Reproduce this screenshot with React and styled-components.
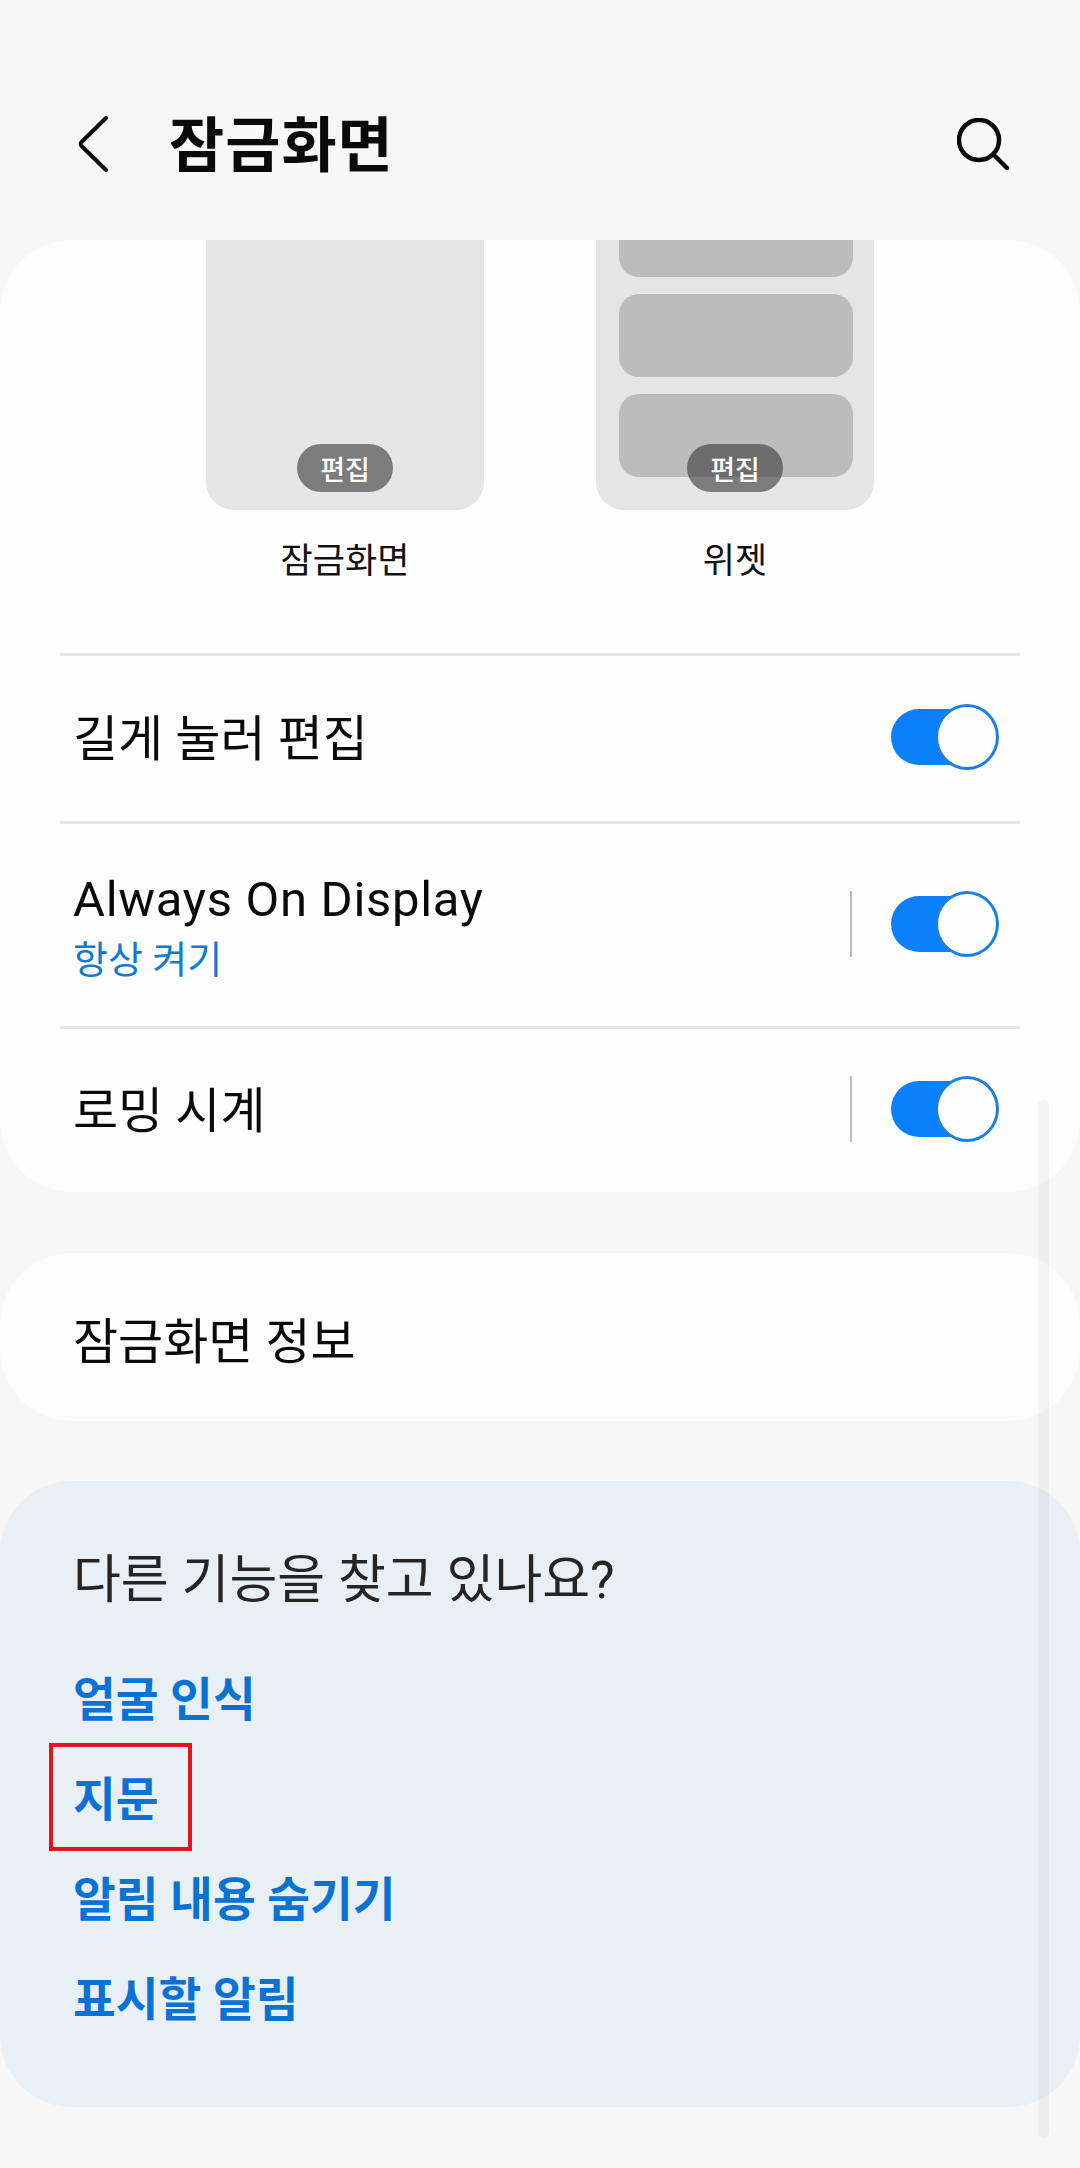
import React from 'react';
import styled, { createGlobalStyle } from 'styled-components';

const Global = createGlobalStyle`
  html, body { margin: 0; padding: 0; background: #f7f7f7; }
  * { box-sizing: border-box; }
`;

const Screen = styled.div`
  position: relative;
  width: 1080px;
  height: 2168px;
  overflow: hidden;
  background: #f7f7f7;
  font-family: Roboto, "Noto Sans CJK KR", sans-serif;
  color: #0a0a0a;
`;

const Header = styled.header`
  height: 240px;
  display: flex;
  align-items: center;
  padding: 48px 71px 0 78px;
`;

const Title = styled.h1`
  margin: 5px 0 0 61px;
  flex: 1;
  font-size: 60px;
  font-weight: 700;
  line-height: 1;
  letter-spacing: 1px;
  color: #0a0a0a;
`;

const IconSvg = styled.svg`
  display: block;
  fill: none;
  stroke: #0a0a0a;
  stroke-linecap: round;
  stroke-linejoin: round;
`;

const Card = styled.section`
  background: #fdfdfd;
  border-radius: 72px;
  overflow: hidden;
`;

const PreviewRow = styled.div`
  height: 413px;
  display: flex;
  justify-content: center;
  gap: 112px;
`;

const PreviewItem = styled.div`
  width: 278px;
  display: flex;
  flex-direction: column;
  align-items: center;
`;

const Preview = styled.div`
  position: relative;
  width: 278px;
  height: 270px;
  flex: none;
  border-radius: 0 0 28px 28px;
  background: #e5e5e5;
  overflow: hidden;
  display: flex;
  flex-direction: column;
  justify-content: flex-end;
  align-items: center;
  gap: 17px;
  padding: 0 0 33px 2px;
`;

const WidgetBlock = styled.div`
  width: 234px;
  height: 83px;
  flex: none;
  border-radius: 20px;
  background: #bcbcbc;
`;

const EditPill = styled.span`
  position: absolute;
  left: 91px;
  bottom: 18px;
  width: 96px;
  height: 48px;
  border-radius: 24px;
  background: rgba(60, 60, 60, 0.62);
  color: #fff;
  font-size: 27px;
  font-weight: 500;
  display: flex;
  align-items: center;
  justify-content: center;
`;

const PreviewLabel = styled.div`
  margin-top: 32px;
  font-size: 35px;
  line-height: 40px;
  color: #111;
`;

const RowList = styled.div`
  display: flex;
  flex-direction: column;
`;

const Row = styled.div`
  height: ${p => p.$h}px;
  margin: 0 60px;
  padding: 0 21px 3px 13px;
  border-top: 3px solid #e7e7e7;
  display: flex;
  align-items: center;
  justify-content: space-between;
`;

const RowText = styled.div`
  display: flex;
  flex-direction: column;
  padding-top: 8px;
`;

const RowTitle = styled.div`
  padding-top: ${p => (p.$latin ? '0' : '6px')};
  font-size: 49px;
  line-height: 56px;
  letter-spacing: ${p => (p.$latin ? '0.7px' : '0')};
`;

const RowSub = styled.div`
  margin-top: 9px;
  font-size: 38px;
  line-height: 46px;
  color: #0d7bd3;
`;

const Controls = styled.div`
  display: flex;
  align-items: center;
`;

const VDivider = styled.div`
  width: 2px;
  height: 66px;
  margin-right: 39px;
  background: #bdbdbd;
`;

const Toggle = styled.div`
  position: relative;
  width: 108px;
  height: 66px;
`;

const Track = styled.div`
  position: absolute;
  left: 0;
  top: 5px;
  width: 100px;
  height: 56px;
  border-radius: 28px;
  background: #0a80fb;
`;

const Thumb = styled.div`
  position: absolute;
  right: 0;
  top: 0;
  width: 64px;
  height: 66px;
  border-radius: 50%;
  background: #fdfdfd;
  border: 3px solid #1c80e0;
`;

const InfoCard = styled.section`
  margin-top: 61px;
  height: 168px;
  padding: 0 73px;
  border-radius: 72px;
  background: #fdfdfd;
  display: flex;
  align-items: center;
  font-size: 49px;
  color: #0a0a0a;
`;

const HelpCard = styled.section`
  margin-top: 60px;
  height: 626px;
  padding: 67px 73px 0;
  border-radius: 72px;
  background: #e8eff5;
`;

const HelpTitle = styled.div`
  font-size: 52px;
  line-height: 66px;
  color: #252525;
`;

const LinkList = styled.div`
  margin-top: 56px;
  display: flex;
  flex-direction: column;
  gap: 40px;
`;

const HelpLink = styled.div`
  position: relative;
  width: max-content;
  font-size: 46.5px;
  line-height: 60px;
  font-weight: 600;
  color: #0a72d2;
`;

const Highlight = styled.div`
  position: absolute;
  left: -24px;
  top: -27px;
  width: 143px;
  height: 108px;
  border: 4px solid #e3141e;
`;

const ScrollBar = styled.div`
  position: absolute;
  left: 1038px;
  top: 1100px;
  width: 11px;
  height: 1038px;
  border-radius: 6px;
  background: rgba(0, 0, 0, 0.04);
`;

const Switch = () => (
  <Toggle>
    <Track />
    <Thumb />
  </Toggle>
);

export default function App() {
  return (
    <Screen>
      <Global />
      <Header>
        <IconSvg width="30" height="56" viewBox="0 0 30 56" strokeWidth="4">
          <path d="M28 2 L3.5 26 Q2 28 3.5 30 L28 54" />
        </IconSvg>
        <Title>잠금화면</Title>
        <IconSvg width="52" height="52" viewBox="0 0 52 52" strokeWidth="4.5">
          <circle cx="22" cy="22" r="20" />
          <path d="M36.5 36.5 L50 50" />
        </IconSvg>
      </Header>

      <Card>
        <PreviewRow>
          <PreviewItem>
            <Preview>
              <EditPill>편집</EditPill>
            </Preview>
            <PreviewLabel>잠금화면</PreviewLabel>
          </PreviewItem>
          <PreviewItem>
            <Preview>
              <WidgetBlock />
              <WidgetBlock />
              <WidgetBlock />
              <EditPill>편집</EditPill>
            </Preview>
            <PreviewLabel>위젯</PreviewLabel>
          </PreviewItem>
        </PreviewRow>
        <RowList>
          <Row $h={168}>
            <RowTitle>길게 눌러 편집</RowTitle>
            <Controls><Switch /></Controls>
          </Row>
          <Row $h={205}>
            <RowText>
              <RowTitle $latin>Always On Display</RowTitle>
              <RowSub>항상 켜기</RowSub>
            </RowText>
            <Controls><VDivider /><Switch /></Controls>
          </Row>
          <Row $h={166}>
            <RowTitle>로밍 시계</RowTitle>
            <Controls><VDivider /><Switch /></Controls>
          </Row>
        </RowList>
      </Card>

      <InfoCard>잠금화면 정보</InfoCard>

      <HelpCard>
        <HelpTitle>다른 기능을 찾고 있나요?</HelpTitle>
        <LinkList>
          <HelpLink>얼굴 인식</HelpLink>
          <HelpLink>지문<Highlight /></HelpLink>
          <HelpLink>알림 내용 숨기기</HelpLink>
          <HelpLink>표시할 알림</HelpLink>
        </LinkList>
      </HelpCard>

      <ScrollBar />
    </Screen>
  );
}
